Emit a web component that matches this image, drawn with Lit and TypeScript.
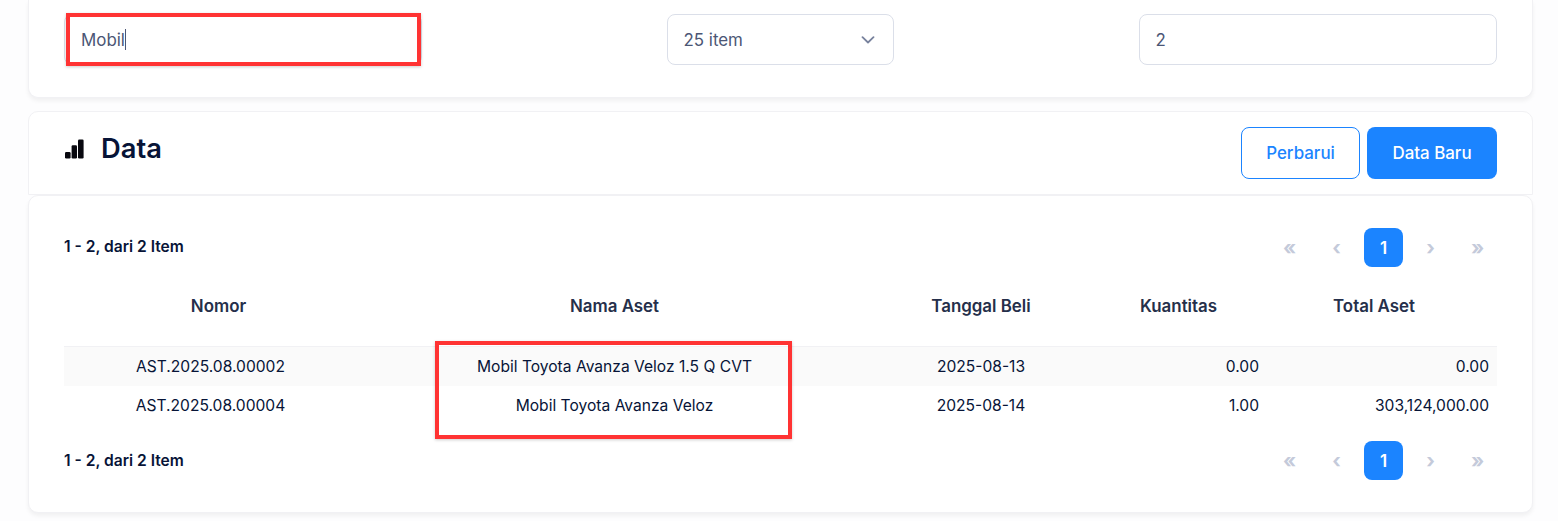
import { LitElement, html, css } from "lit";
import { customElement } from "lit/decorators.js";

const rows = [
  ["AST.2025.08.00002", "Mobil Toyota Avanza Veloz 1.5 Q CVT", "2025-08-13", "0.00", "0.00"],
  ["AST.2025.08.00004", "Mobil Toyota Avanza Veloz", "2025-08-14", "1.00", "303,124,000.00"],
];

@customElement("app-root")
export class AppRoot extends LitElement {
  static styles = css`
    :host {
      display: block;
      position: relative;
      height: 521px;
      overflow: hidden;
      background: #fdfdfe;
      font-family: Inter, "Liberation Sans", sans-serif;
      color: #071437;
    }
    .page { display: flex; flex-direction: column; padding: 0 25px 0 28px; }
    .card {
      background: #fff;
      border: 1px solid #f1f1f4;
      border-radius: 10px;
      box-shadow: 0 3px 4px rgba(0, 0, 0, 0.05);
    }
    .filters {
      border-top: 0;
      border-radius: 0 0 10px 10px;
      height: 98px;
      box-sizing: border-box;
      padding: 14px 35px 0;
      display: flex;
      justify-content: space-between;
      align-items: flex-start;
      margin-bottom: 13px;
    }
    .field {
      box-sizing: border-box;
      height: 51px;
      border: 1px solid #dbdfe9;
      border-radius: 8px;
      background: #fff;
      display: flex;
      align-items: center;
      padding: 0 16px;
      font-size: 16.9px;
      color: #4b5675;
    }
    .wide { width: 358px; }
    .shift { padding-left: 15.5px; }
    .select { width: 227px; justify-content: space-between; padding-right: 18px; }
    .caret { width: 1px; height: 21px; background: #4b5675; margin-left: 0; }
    .head {
      height: 84px;
      box-sizing: border-box;
      padding: 16px 35px 0;
      display: flex;
      justify-content: space-between;
      align-items: flex-start;
      border-radius: 10px 10px 0 0;
      box-shadow: none;
    }
    .title { display: flex; align-items: center; gap: 16px; font-size: 27.3px; font-weight: 600; line-height: 42px; }
    .title svg { display: block; }
    .actions { display: flex; gap: 7px; margin-top: -1px; }
    .btn {
      box-sizing: border-box;
      height: 52px;
      border-radius: 8px;
      display: flex;
      align-items: center;
      justify-content: center;
      font-size: 16.9px;
      font-weight: 500;
    }
    .outline { width: 119px; border: 1px solid #1b84ff; color: #1b84ff; background: #fff; }
    .primary { width: 130px; background: #1b84ff; color: #fff; }
    .table-card {
      height: 318px;
      box-sizing: border-box;
      padding: 32px 35px 0;
    }
    .pager-row { display: flex; justify-content: space-between; align-items: center; height: 39px; }
    .count { font-size: 15.6px; font-weight: 600; margin-top: -3px; }
    .bottom .count { margin-top: -1px; }
    .pager { display: flex; gap: 8px; }
    .pg {
      width: 39px;
      height: 39px;
      border-radius: 8px;
      display: flex;
      align-items: center;
      justify-content: center;
      font-size: 20px;
      font-weight: 700;
      color: #c4cada;
    }
    .pg.on { background: #1b84ff; color: #fff; font-size: 16.9px; font-weight: 600; }
    table { width: 100%; border-collapse: collapse; table-layout: fixed; margin-top: 20px; }
    th {
      height: 59px;
      padding: 0 0 21px;
      box-sizing: border-box;
      font-size: 16.9px;
      font-weight: 600;
      color: #252f4a;
      text-align: center;
      border-bottom: 1px solid #f1f1f4;
    }
    th:first-child { padding-left: 16px; }
    th:last-child { padding-right: 16px; }
    td {
      height: 38px;
      padding: 0 8px;
      box-sizing: border-box;
      font-size: 15.6px;
      text-align: center;
      color: #071437;
    }
    tbody tr:nth-child(odd) td { background: #fafafa; height: 40px; }
    td.num { text-align: right; }
    .bottom { margin-top: 17px; }
    .mark {
      position: absolute;
      box-sizing: border-box;
      border: 4px solid #ff3333;
      box-shadow: 0 1px 3px rgba(0, 0, 0, 0.2);
    }
    .mark-a { left: 66px; top: 13px; width: 355px; height: 53px; }
    .mark-b { left: 435px; top: 341px; width: 357px; height: 98px; }
  `;

  private pager() {
    return html`<div class="pager">
      <div class="pg">«</div>
      <div class="pg">‹</div>
      <div class="pg on">1</div>
      <div class="pg">›</div>
      <div class="pg">»</div>
    </div>`;
  }

  render() {
    return html`
      <div class="page">
        <div class="card filters">
          <div class="field wide">Mobil<span class="caret"></span></div>
          <div class="field select shift">
            25 item
            <svg width="14" height="8" viewBox="0 0 14 8" fill="none" stroke="#78829d" stroke-width="1.8" stroke-linecap="round" stroke-linejoin="round">
              <path d="M1.5 1.2 7 6.5l5.5-5.3" />
            </svg>
          </div>
          <div class="field wide shift">2</div>
        </div>
        <div class="card head">
          <div class="title">
            <svg width="21" height="21" viewBox="0 0 21 21" fill="#08080f">
              <rect x="1" y="13" width="5.6" height="6.4" rx="1.2" />
              <rect x="7.6" y="6.2" width="5.4" height="13.2" rx="1.2" />
              <rect x="14" y="0.6" width="5.6" height="18.8" rx="1.2" />
            </svg>
            Data
          </div>
          <div class="actions">
            <div class="btn outline">Perbarui</div>
            <div class="btn primary">Data Baru</div>
          </div>
        </div>
        <div class="card table-card">
          <div class="pager-row"><div class="count">1 - 2, dari 2 Item</div>${this.pager()}</div>
          <table>
            <colgroup>
              <col style="width:293px" /><col style="width:515px" /><col style="width:218px" /><col style="width:177px" /><col style="width:230px" />
            </colgroup>
            <thead>
              <tr><th>Nomor</th><th>Nama Aset</th><th>Tanggal Beli</th><th>Kuantitas</th><th>Total Aset</th></tr>
            </thead>
            <tbody>
              ${rows.map(
                (r) => html`<tr>
                  <td>${r[0]}</td><td>${r[1]}</td><td>${r[2]}</td>
                  <td class="num">${r[3]}</td><td class="num">${r[4]}</td>
                </tr>`
              )}
            </tbody>
          </table>
          <div class="pager-row bottom"><div class="count">1 - 2, dari 2 Item</div>${this.pager()}</div>
        </div>
      </div>
      <div class="mark mark-a"></div>
      <div class="mark mark-b"></div>
    `;
  }
}
